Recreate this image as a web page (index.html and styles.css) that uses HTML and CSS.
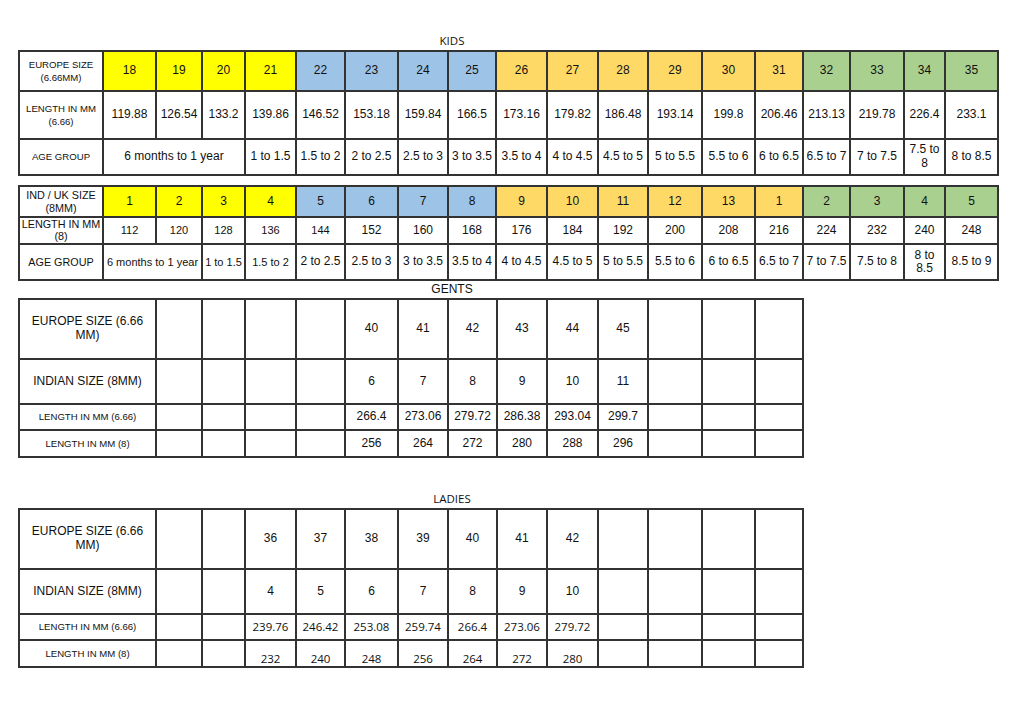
FILE: index.html
```html
<!DOCTYPE html>
<html>
<head>
<meta charset="utf-8">
<link rel="stylesheet" href="styles.css">
</head>
<body>
<div class="sheet">
  <div class="title calibri">KIDS</div>
  <table class="grid kids kids1">
    <colgroup>
      <col class="w84"><col class="w53"><col class="w46"><col class="w43"><col class="w51"><col class="w49"><col class="w53"><col class="w50"><col class="w48"><col class="w51"><col class="w51"><col class="w50"><col class="w54"><col class="w53"><col class="w48"><col class="w47"><col class="w54"><col class="w41"><col class="w53">
    </colgroup>
    <tr class="r40">
      <td class="lbl">EUROPE SIZE<br>(6.66MM)</td>
      <td class="y">18</td><td class="y">19</td><td class="y">20</td><td class="y">21</td>
      <td class="b">22</td><td class="b">23</td><td class="b">24</td><td class="b">25</td>
      <td class="g">26</td><td class="g">27</td><td class="g">28</td><td class="g">29</td><td class="g">30</td><td class="g">31</td>
      <td class="gr">32</td><td class="gr">33</td><td class="gr">34</td><td class="gr">35</td>
    </tr>
    <tr class="r48">
      <td class="lbl">LENGTH IN MM<br>(6.66)</td>
      <td>119.88</td><td>126.54</td><td>133.2</td><td>139.86</td><td>146.52</td><td>153.18</td><td>159.84</td><td>166.5</td><td>173.16</td><td>179.82</td><td>186.48</td><td>193.14</td><td>199.8</td><td>206.46</td><td>213.13</td><td>219.78</td><td>226.4</td><td>233.1</td>
    </tr>
    <tr class="r36">
      <td class="lbl">AGE GROUP</td>
      <td colspan="3">6 months to 1 year</td><td>1 to 1.5</td><td>1.5 to 2</td><td>2 to 2.5</td><td>2.5 to 3</td><td>3 to 3.5</td><td>3.5 to 4</td><td>4 to 4.5</td><td>4.5 to 5</td><td>5 to 5.5</td><td>5.5 to 6</td><td>6 to 6.5</td><td>6.5 to 7</td><td>7 to 7.5</td><td class="tight">7.5 to 8</td><td>8 to 8.5</td>
    </tr>
  </table>

  <table class="grid kids kids2">
    <colgroup>
      <col class="w84"><col class="w53"><col class="w46"><col class="w43"><col class="w51"><col class="w49"><col class="w53"><col class="w50"><col class="w48"><col class="w51"><col class="w51"><col class="w50"><col class="w54"><col class="w53"><col class="w48"><col class="w47"><col class="w54"><col class="w41"><col class="w53">
    </colgroup>
    <tr class="r31">
      <td class="lbl">IND / UK SIZE<br>(8MM)</td>
      <td class="y">1</td><td class="y">2</td><td class="y">3</td><td class="y">4</td>
      <td class="b">5</td><td class="b">6</td><td class="b">7</td><td class="b">8</td>
      <td class="g">9</td><td class="g">10</td><td class="g">11</td><td class="g">12</td><td class="g">13</td><td class="g">1</td>
      <td class="gr">2</td><td class="gr">3</td><td class="gr">4</td><td class="gr">5</td>
    </tr>
    <tr class="r27">
      <td class="lbl lbl2">LENGTH IN MM<br>(8)</td>
      <td class="s">112</td><td class="s">120</td><td class="s">128</td><td class="s">136</td><td class="s">144</td><td>152</td><td>160</td><td>168</td><td>176</td><td>184</td><td>192</td><td>200</td><td>208</td><td>216</td><td>224</td><td>232</td><td>240</td><td>248</td>
    </tr>
    <tr class="r36">
      <td class="lbl">AGE GROUP</td>
      <td colspan="2" class="s">6 months to 1 year</td><td class="s">1 to 1.5</td><td class="s">1.5 to 2</td><td>2 to 2.5</td><td>2.5 to 3</td><td>3 to 3.5</td><td>3.5 to 4</td><td>4 to 4.5</td><td>4.5 to 5</td><td>5 to 5.5</td><td>5.5 to 6</td><td>6 to 6.5</td><td>6.5 to 7</td><td>7 to 7.5</td><td>7.5 to 8</td><td class="tight">8 to 8.5</td><td>8.5 to 9</td>
    </tr>
  </table>

  <div class="title title-gents">GENTS</div>
  <table class="grid adult">
    <colgroup>
      <col class="w137"><col class="w46"><col class="w43"><col class="w51"><col class="w49"><col class="w53"><col class="w50"><col class="w49"><col class="w50"><col class="w51"><col class="w50"><col class="w54"><col class="w53"><col class="w48">
    </colgroup>
    <tr class="r60">
      <td class="big">EUROPE SIZE (6.66 MM)</td>
      <td></td><td></td><td></td><td></td><td>40</td><td>41</td><td>42</td><td>43</td><td>44</td><td>45</td><td></td><td></td><td></td>
    </tr>
    <tr class="r45">
      <td class="big">INDIAN SIZE (8MM)</td>
      <td></td><td></td><td></td><td></td><td>6</td><td>7</td><td>8</td><td>9</td><td>10</td><td>11</td><td></td><td></td><td></td>
    </tr>
    <tr class="r26">
      <td class="small">LENGTH IN MM (6.66)</td>
      <td></td><td></td><td></td><td></td><td>266.4</td><td>273.06</td><td>279.72</td><td>286.38</td><td>293.04</td><td>299.7</td><td></td><td></td><td></td>
    </tr>
    <tr class="r27">
      <td class="small">LENGTH IN MM (8)</td>
      <td></td><td></td><td></td><td></td><td>256</td><td>264</td><td>272</td><td>280</td><td>288</td><td>296</td><td></td><td></td><td></td>
    </tr>
  </table>

  <div class="title title-ladies calibri">LADIES</div>
  <table class="grid adult">
    <colgroup>
      <col class="w137"><col class="w46"><col class="w43"><col class="w51"><col class="w49"><col class="w53"><col class="w50"><col class="w49"><col class="w50"><col class="w51"><col class="w50"><col class="w54"><col class="w53"><col class="w48">
    </colgroup>
    <tr class="r60">
      <td class="big">EUROPE SIZE (6.66 MM)</td>
      <td></td><td></td><td>36</td><td>37</td><td>38</td><td>39</td><td>40</td><td>41</td><td>42</td><td></td><td></td><td></td><td></td>
    </tr>
    <tr class="r45">
      <td class="big">INDIAN SIZE (8MM)</td>
      <td></td><td></td><td>4</td><td>5</td><td>6</td><td>7</td><td>8</td><td>9</td><td>10</td><td></td><td></td><td></td><td></td>
    </tr>
    <tr class="r26 cal">
      <td class="small">LENGTH IN MM (6.66)</td>
      <td></td><td></td><td>239.76</td><td>246.42</td><td>253.08</td><td>259.74</td><td>266.4</td><td>273.06</td><td>279.72</td><td></td><td></td><td></td><td></td>
    </tr>
    <tr class="r27 cal low">
      <td class="small">LENGTH IN MM (8)</td>
      <td></td><td></td><td>232</td><td>240</td><td>248</td><td>256</td><td>264</td><td>272</td><td>280</td><td></td><td></td><td></td><td></td>
    </tr>
  </table>
</div>
</body>
</html>
```

FILE: styles.css
```css
html, body {
  margin: 0;
  padding: 0;
  background: #ffffff;
}

body {
  font-family: "Liberation Sans", Arial, sans-serif;
  color: #111111;
}

.sheet {
  padding: 32px 0 0 18px;
}

.title {
  width: 868px;
  height: 18px;
  line-height: 18px;
  text-align: center;
  font-size: 12px;
  color: #111111;
}

.calibri {
  font-family: "Open Sans", "Liberation Sans", sans-serif;
  font-size: 11.5px;
}

.title-gents {
  height: 17px;
  line-height: 17px;
}

.title-ladies {
  margin-top: 32px;
}

.grid {
  border-collapse: collapse;
  table-layout: fixed;
  border: 2px solid #2a2a2a;
}

.grid td {
  border: 2px solid #333333;
  padding: 0 1px;
  text-align: center;
  vertical-align: middle;
  overflow: hidden;
  line-height: 1.15;
}

.kids {
  width: 979px;
}

.kids1 td {
  font-size: 12px;
}

.kids1 td.lbl {
  font-size: 9.6px;
  line-height: 1.4;
}

.kids2 {
  margin-top: 9px;
}

.kids2 td {
  font-size: 12px;
  line-height: 1.1;
}

.kids2 td.s {
  font-size: 11px;
}

.kids2 td.lbl {
  font-size: 10.8px;
  line-height: 1.2;
}

.kids2 td.lbl2 {
  line-height: 1.05;
}

.tight {
  padding: 0 4px;
}

.adult {
  width: 784px;
}

.adult td {
  font-size: 12px;
}

.adult td.big {
  font-size: 12px;
  padding: 0 8px;
}

.adult td.small {
  font-size: 9.6px;
}

.cal td {
  font-family: "Open Sans", "Liberation Sans", sans-serif;
  font-size: 11.5px;
}

.cal td.small {
  font-family: "Liberation Sans", Arial, sans-serif;
  font-size: 9.6px;
}

.low td {
  vertical-align: bottom;
  padding-bottom: 0;
  line-height: 1.2;
}

.low td.small {
  vertical-align: middle;
}

.y { background: #ffff00; }
.b { background: #9dc3e6; }
.g { background: #ffd966; }
.gr { background: #a9d08e; }

.r26 { height: 26px; }
.r27 { height: 27px; }
.r31 { height: 31px; }
.r36 { height: 36px; }
.r40 { height: 40px; }
.r45 { height: 45px; }
.r48 { height: 48px; }
.r60 { height: 60px; }

.w41 { width: 41px; }
.w43 { width: 43px; }
.w46 { width: 46px; }
.w47 { width: 47px; }
.w48 { width: 48px; }
.w49 { width: 49px; }
.w50 { width: 50px; }
.w51 { width: 51px; }
.w53 { width: 53px; }
.w54 { width: 54px; }
.w84 { width: 84px; }
.w137 { width: 137px; }
```
